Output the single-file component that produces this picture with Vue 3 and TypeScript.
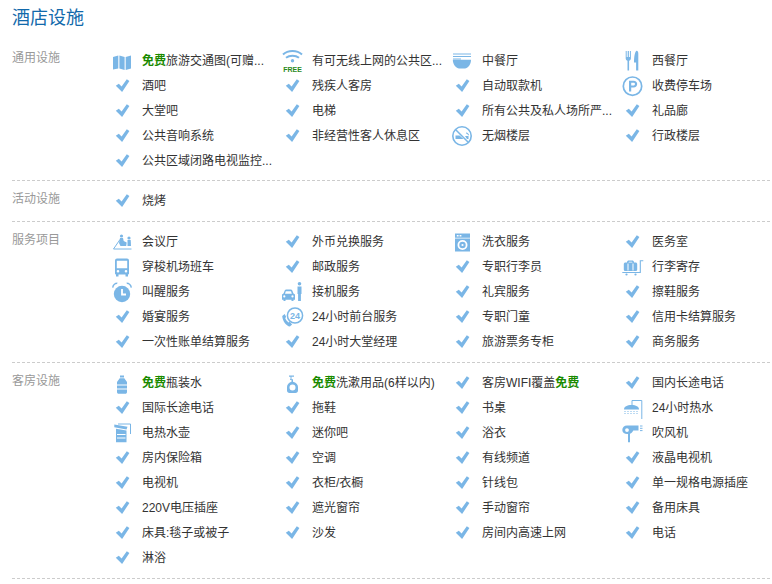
<script setup lang="ts">
interface Item {
  t: string
  i?: string
  free?: 'pre' | 'post'
}
interface Section {
  name: string
  items: Item[]
}
const sections: Section[] = [
  {
    name: '通用设施',
    items: [
      { t: '旅游交通图(可赠...', i: 'map', free: 'pre' },
      { t: '有可无线上网的公共区...', i: 'wifi' },
      { t: '中餐厅', i: 'bowl' },
      { t: '西餐厅', i: 'fork' },
      { t: '酒吧' },
      { t: '残疾人客房' },
      { t: '自动取款机' },
      { t: '收费停车场', i: 'parking' },
      { t: '大堂吧' },
      { t: '电梯' },
      { t: '所有公共及私人场所严...' },
      { t: '礼品廊' },
      { t: '公共音响系统' },
      { t: '非经营性客人休息区' },
      { t: '无烟楼层', i: 'nosmoke' },
      { t: '行政楼层' },
      { t: '公共区域闭路电视监控...' },
    ],
  },
  { name: '活动设施', items: [{ t: '烧烤' }] },
  {
    name: '服务项目',
    items: [
      { t: '会议厅', i: 'meeting' },
      { t: '外币兑换服务' },
      { t: '洗衣服务', i: 'washer' },
      { t: '医务室' },
      { t: '穿梭机场班车', i: 'bus' },
      { t: '邮政服务' },
      { t: '专职行李员' },
      { t: '行李寄存', i: 'luggage' },
      { t: '叫醒服务', i: 'alarm' },
      { t: '接机服务', i: 'pickup' },
      { t: '礼宾服务' },
      { t: '擦鞋服务' },
      { t: '婚宴服务' },
      { t: '24小时前台服务', i: 'phone24' },
      { t: '专职门童' },
      { t: '信用卡结算服务' },
      { t: '一次性账单结算服务' },
      { t: '24小时大堂经理' },
      { t: '旅游票务专柜' },
      { t: '商务服务' },
    ],
  },
  {
    name: '客房设施',
    items: [
      { t: '瓶装水', i: 'bottle', free: 'pre' },
      { t: '洗漱用品(6样以内)', i: 'toiletry', free: 'pre' },
      { t: '客房WIFI覆盖', free: 'post' },
      { t: '国内长途电话' },
      { t: '国际长途电话' },
      { t: '拖鞋' },
      { t: '书桌' },
      { t: '24小时热水', i: 'shower' },
      { t: '电热水壶', i: 'kettle' },
      { t: '迷你吧' },
      { t: '浴衣' },
      { t: '吹风机', i: 'dryer' },
      { t: '房内保险箱' },
      { t: '空调' },
      { t: '有线频道' },
      { t: '液晶电视机' },
      { t: '电视机' },
      { t: '衣柜/衣橱' },
      { t: '针线包' },
      { t: '单一规格电源插座' },
      { t: '220V电压插座' },
      { t: '遮光窗帘' },
      { t: '手动窗帘' },
      { t: '备用床具' },
      { t: '床具:毯子或被子' },
      { t: '沙发' },
      { t: '房间内高速上网' },
      { t: '电话' },
      { t: '淋浴' },
    ],
  },
]
</script>

<template>
  <div class="page">
    <svg class="defs" width="0" height="0" aria-hidden="true">
      <symbol id="i-check" viewBox="0 0 24 24">
        <path d="M5.800 11.800l3-2.100 2.800 2.700L16.800 5.300l2.600 1.800-7.300 10.800z" />
      </symbol>
      <symbol id="i-map" viewBox="0 0 24 24">
        <path d="M3 8l5.300-1.500v13L3 20.500zM9.400 6.500L14.600 8v13l-5.200-1.500zM15.700 8L21 6.500v13L15.700 21z" />
      </symbol>
      <symbol id="i-wifi" viewBox="0 0 24 24">
        <path class="ln" d="M3 5.500C8 .8 17 .8 22 5.500M6 8.800c3.500-2.800 9.500-2.800 13 0" stroke-width="2" />
        <circle cx="12.500" cy="11.800" r="1.700" />
      </symbol>
      <symbol id="i-bowl" viewBox="0 0 24 24">
        <path class="ln" d="M3 5h18M3 7.500h18M3 10h8" stroke-width="1" />
        <path d="M2.800 10.800h18.200C21 16 17.500 19.500 15 19.500H9C6.500 19.500 2.800 16 2.800 10.800z" />
      </symbol>
      <symbol id="i-fork" viewBox="0 0 24 24">
        <path d="M5.700 2h1v6h1V2h1.200v6h1V2h1v7.500c0 1.300-1 2-1.800 2.300v9.700H7.500v-9.700c-.8-.3-1.800-1-1.800-2.300z" />
        <path d="M16.800 1.800c1 0 1.500 1.400 1.500 3v16.700h-2.200v-8H14c0-5 .8-11.700 2.800-11.700z" />
      </symbol>
      <symbol id="i-parking" viewBox="0 0 24 24">
        <circle class="ln" cx="12.500" cy="12.200" r="9.200" stroke-width="1.700" />
        <path d="M9 6.800h4.500c2.300 0 3.700 1.400 3.700 3.300s-1.400 3.400-3.700 3.400h-2.300v4H9zM11.200 8.700v2.900h2.200c.9 0 1.600-.6 1.600-1.500s-.7-1.400-1.600-1.400z" fill-rule="evenodd" />
      </symbol>
      <symbol id="i-nosmoke" viewBox="0 0 24 24">
        <circle class="ln" cx="12" cy="12" r="9.200" stroke-width="1.600" />
        <path class="ln" d="M5.500 5.500l13 13" stroke-width="1.500" />
        <path d="M5.500 11.500h4l4 3.500H5.500zM15 12h3.500v3H17zM16 8.500c1.800.3 3 1.200 3 2.800h-1c0-1-.8-1.700-2-1.900z" />
      </symbol>
      <symbol id="i-meeting" viewBox="0 0 24 24">
        <path class="ln" d="M10 9.500L3.500 19H21.500" stroke-width="1" />
        <circle cx="11.500" cy="6" r="1.600" />
        <path d="M10 8h3l.7 3 3 1.500-.5 3.500H10.500l-1.500-3z" />
        <circle cx="19" cy="8" r="1.600" />
        <path d="M17.500 10h3.200l.3 6h-3.500z" />
      </symbol>
      <symbol id="i-bus" viewBox="0 0 24 24">
        <path d="M7 3.500h10a2 2 0 012 2v13a1 1 0 01-1 1v2h-2.500v-2h-7v2H6v-2a1 1 0 01-1-1v-13a2 2 0 012-2zM6.800 5.800v7.500h10.400V5.800zM8 15a1.300 1.300 0 100 2.600A1.300 1.300 0 008 15zM16 15a1.300 1.300 0 100 2.600 1.300 1.300 0 000-2.600z" fill-rule="evenodd" />
      </symbol>
      <symbol id="i-alarm" viewBox="0 0 24 24">
        <circle cx="12" cy="14" r="8.200" />
        <path class="ln-w" d="M12 9v5.500h4" stroke-width="1.800" />
        <path d="M2 7.500C2.300 4.500 4.500 2.500 7.500 2.500l-.4 1.500C5 4.200 3.800 5.500 3.400 7.800zM22 7.500C21.700 4.500 19.500 2.500 16.500 2.500l.4 1.500c2.100.2 3.300 1.500 3.700 3.800z" />
      </symbol>
      <symbol id="i-pickup" viewBox="0 0 24 24">
        <circle cx="19.500" cy="3.800" r="1.800" />
        <path d="M17.500 6.500h4v7.500h-.6V21h-2.800v-7h-.6z" />
        <path d="M2 14.500l1.500-1 1.200-3c.3-.6.9-.9 1.500-.9h4.600c.7 0 1.200.3 1.500.9l1.200 3 1.500 1v5.300h-1.500v1.200h-2v-1.200H5.500v1.200h-2v-1.200H2zM5.800 11.300l-.8 2.400h6.800l-.8-2.400zM4.300 15.300a1.100 1.100 0 100 2.200 1.100 1.100 0 000-2.200zM12.500 15.300a1.100 1.100 0 100 2.200 1.100 1.100 0 000-2.200z" fill-rule="evenodd" />
      </symbol>
      <symbol id="i-phone24" viewBox="0 0 24 24">
        <circle class="ln" cx="15" cy="10.500" r="7.600" stroke-width="1.500" />
        <path d="M2.200 11l2.500-1.900 1.500 2.900-1 1c.5 1.700 1.800 3.400 3.500 4.500l1-.8 2.400 2.700-2.200 2.200C6 20.800 2.700 16.200 2.200 11z" />
      </symbol>
      <symbol id="i-washer" viewBox="0 0 24 24">
        <path d="M5 3.500h15v18H5zM6.800 5v1.600h1.800V5zM9.600 5v1.600h1.800V5zM5 7.800v.7h15v-.7zM12.500 10a5 5 0 100 10 5 5 0 000-10z" fill-rule="evenodd" />
        <circle cx="12.500" cy="15" r="3.200" />
        <circle class="hole" cx="12.500" cy="15" r="1.100" />
      </symbol>
      <symbol id="i-luggage" viewBox="0 0 24 24">
        <path class="ln" d="M2.300 17.500h18V5.800h3" stroke-width="1.100" />
        <path d="M7 7.500C7 6 7.800 5.500 8.800 5.500h3.400c1 0 1.800.5 1.800 2H15.500c.9 0 1.700.7 1.700 1.600v5.400c0 .9-.8 1.600-1.700 1.600h-10c-.9 0-1.700-.7-1.700-1.600V9.100c0-.9.8-1.600 1.700-1.600zM8.500 7.500h4c0-.5-.3-.8-.8-.8H9.300c-.5 0-.8.3-.8.8zM7.500 8.500v7h1v-7zM12.500 8.500v7h1v-7z" fill-rule="evenodd" />
        <circle cx="6.500" cy="19.500" r="1.100" />
        <circle cx="15.500" cy="19.500" r="1.100" />
      </symbol>
      <symbol id="i-bottle" viewBox="0 0 24 24">
        <path d="M10 4.500h4v2h-4zM9.700 7.200h4.600L17 11v2.500H7V11zM7 14.500h10v3H7zM7 18.500h10v2.500c0 1-.7 1.800-1.700 1.800H8.700c-1 0-1.700-.8-1.700-1.800z" />
      </symbol>
      <symbol id="i-toiletry" viewBox="0 0 24 24">
        <path d="M9 4.500h5v1.300h-2.500v2.400h1.500v2.600c3 .7 5 2.700 5 5.200v3.500c0 1.400-1 2.500-2.500 2.500h-6C8 22 7 20.900 7 19.500V16c0-2.500 2-4.500 4.500-5.200V9H10V8.200h.5V5.800H9zM12.500 13.500a3 3 0 100 6 3 3 0 000-6z" fill-rule="evenodd" />
      </symbol>
      <symbol id="i-kettle" viewBox="0 0 24 24">
        <path d="M4.300 3.500l13.200 2.200-1 2.800-12.200-2.200zM6 7.800l10.500 1.700v11.700H6z" />
        <path class="ln" d="M8 3h12.500v10" stroke-width="1" />
        <path class="ln-w" d="M7 13.500h8.500M7 17h8.500" stroke-width="1.200" />
      </symbol>
      <symbol id="i-shower" viewBox="0 0 24 24">
        <path class="ln" d="M12 9V4.500h9.800V23" stroke-width="1" />
        <path d="M4 13.500c0-3 3-4.500 7.500-4.500s7.500 1.500 7.500 4.500z" />
        <path class="ln" d="M5 15v3M8 15v3M11 15v3M14 15v3M17 15v3" stroke-width="1" stroke-dasharray="1 1" />
      </symbol>
      <symbol id="i-dryer" viewBox="0 0 24 24">
        <path d="M7 4.500h11.500v5H13.300c-.7 1.500-1.800 2.700-3.300 3.200v8.500H8v-8.200C5 13.300 2.300 11.800 2.300 9c0-2.700 2-4.500 4.700-4.500zM7 7.200A1.900 1.900 0 107 11a1.900 1.900 0 000-3.800z" fill-rule="evenodd" />
        <path class="ln" d="M20 5h2.500M20 7.300h2.500M20 9.600h2.500" stroke-width="1" />
      </symbol>
    </svg>

    <h2 class="title">酒店设施</h2>
    <section v-for="s in sections" :key="s.name" class="sec">
      <div class="name">{{ s.name }}</div>
      <ul class="grid">
        <li v-for="it in s.items" :key="it.t" class="item">
          <svg class="ico">
            <use :href="'#i-' + (it.i || 'check')" />
            <text v-if="it.i === 'wifi'" x="12.500" y="22.500" class="free-t">FREE</text>
            <text v-if="it.i === 'phone24'" x="15" y="13.800" class="t24">24</text>
          </svg>
          <span class="txt"><b v-if="it.free === 'pre'">免费</b>{{ it.t }}<b v-if="it.free === 'post'">免费</b></span>
        </li>
      </ul>
    </section>
  </div>
</template>

<style scoped>
.page {
  width: 772px;
  height: 584px;
  overflow: hidden;
  background: #fff;
  box-sizing: border-box;
  padding: 0 2px 0 12px;
  font: 12px/25px "Liberation Sans", "Noto Sans CJK SC", sans-serif;
  color: #333;
}
.defs {
  position: absolute;
}
.title {
  margin: 0;
  height: 48px;
  font-size: 18px;
  font-weight: 400;
  line-height: 36px;
  color: #1169ab;
}
.sec {
  display: flex;
  padding: 0 0 8px;
  margin-bottom: 7px;
  border-bottom: 1px dashed #ccc;
}
.sec:first-of-type {
  padding-bottom: 7px;
}
.name {
  width: 100px;
  flex: none;
  color: #999;
  line-height: 20px;
  padding-top: 1px;
}
.sec:first-of-type .name {
  padding-top: 0;
}
.grid {
  list-style: none;
  margin: 0;
  padding: 0;
  display: grid;
  grid-template-columns: repeat(4, 170px);
  grid-auto-rows: 25px;
}
.item {
  display: flex;
  align-items: center;
  min-width: 0;
}
.ico {
  width: 24px;
  height: 24px;
  margin: 0 8px 0 -2px;
  flex: none;
  fill: #7ab6e6;
}
.txt {
  padding-top: 2px;
  line-height: 23px;
  white-space: nowrap;
}
.txt b {
  color: #1a8a00;
  font-weight: 700;
}
.free-t {
  font: 700 7px "Liberation Sans", sans-serif;
  text-anchor: middle;
  fill: #2a8a1a;
}
.t24 {
  font: 700 9px "Liberation Sans", sans-serif;
  text-anchor: middle;
  fill: #7ab6e6;
}
</style>

<style>
.ln {
  fill: none;
  stroke: #7ab6e6;
}
.ln-w {
  fill: none;
  stroke: #fff;
}
.hole {
  fill: #fff;
}
</style>
